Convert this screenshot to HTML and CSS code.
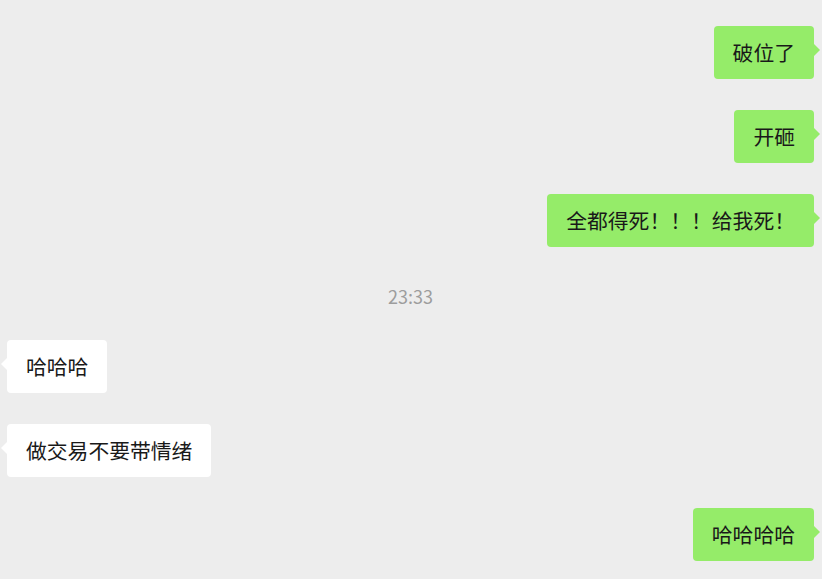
FILE: index.html
```html
<!DOCTYPE html>
<html lang="zh-CN">
<head>
    <meta charset="UTF-8">
    <meta name="viewport" content="width=device-width, initial-scale=1.0">
    <title>聊天</title>
    <link rel="stylesheet" href="styles.css">
</head>
<body>
    <div class="chat">
        <div class="row mine"><div class="bubble">破位了</div></div>
        <div class="row mine"><div class="bubble">开砸</div></div>
        <div class="row mine"><div class="bubble">全都得死！！！给我死！</div></div>
        <div class="time">23:33</div>
        <div class="row other"><div class="bubble">哈哈哈</div></div>
        <div class="row other"><div class="bubble">做交易不要带情绪</div></div>
        <div class="row mine"><div class="bubble">哈哈哈哈</div></div>
    </div>
</body>
</html>
```

FILE: styles.css
```css
body{
    margin: 0;
    background-color: #ededed;
    font-family: "Noto Sans CJK SC", "Microsoft YaHei", sans-serif;
}

.chat{
    display: flex;
    flex-direction: column;
    gap: 31px;
    padding: 26px 8px 0 7px;
}

.row{
    display: flex;
}

.row.mine{
    justify-content: flex-end;
}

.row.other{
    justify-content: flex-start;
}

.bubble{
    position: relative;
    padding: 11px 19px;
    font-size: 20.8px;
    line-height: 31px;
    color: #191919;
    border-radius: 4px;
    background-color: #fff;
}

.mine .bubble{
    background-color: #95ec69;
}

.bubble::after{
    content: "";
    position: absolute;
    top: 17px;
    border: 7px solid transparent;
}

.mine .bubble::after{
    right: -13px;
    border-left-color: #95ec69;
}

.other .bubble::after{
    left: -13px;
    border-right-color: #fff;
}

.time{
    text-align: center;
    font-size: 18px;
    line-height: 25px;
    padding-top: 6px;
    color: #9d9d9d;
}
```
